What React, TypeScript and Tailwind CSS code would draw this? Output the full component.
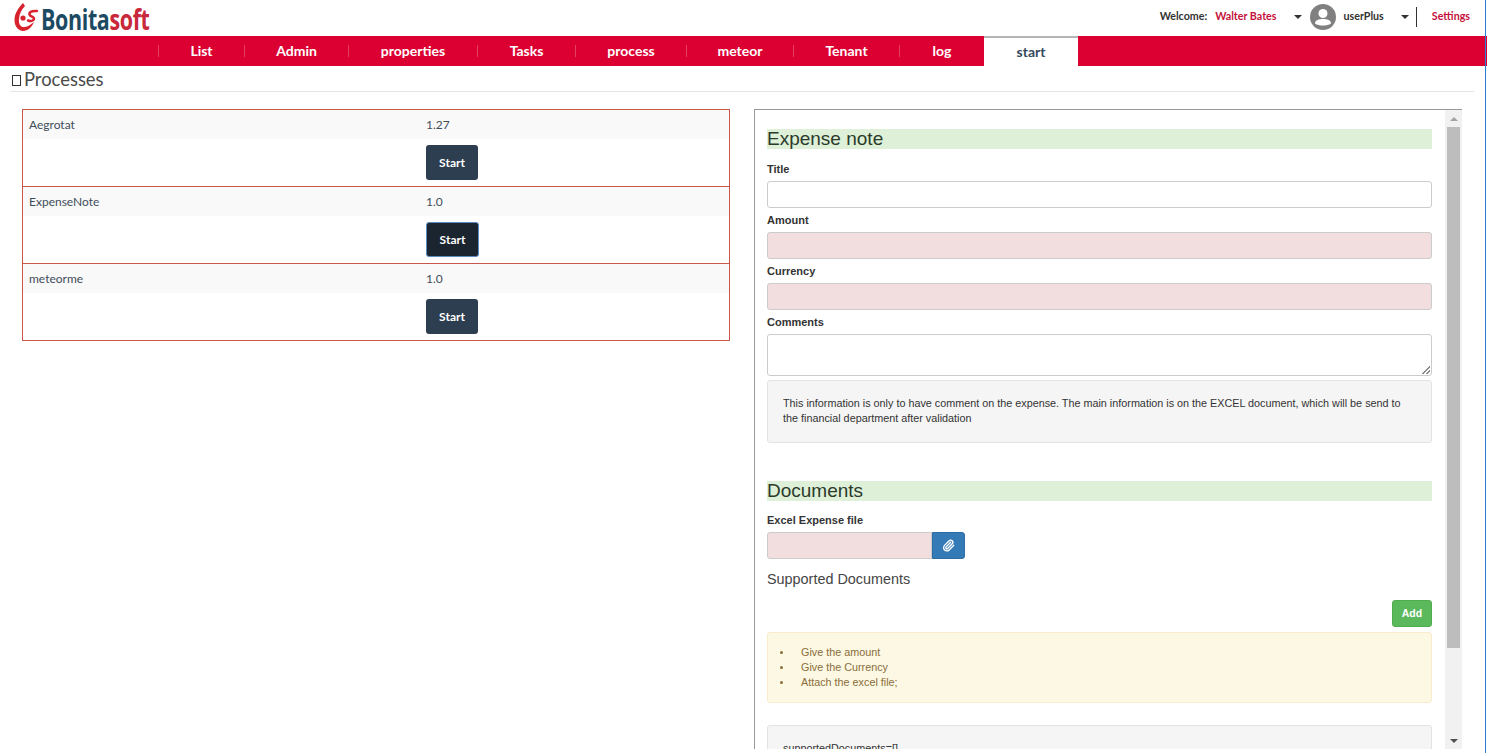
import { Paperclip } from "lucide-react";

const tabs = [
  { label: "List", width: "w-[86px]" },
  { label: "Admin", width: "w-[104px]" },
  { label: "properties", width: "w-[129px]" },
  { label: "Tasks", width: "w-[98px]" },
  { label: "process", width: "w-[111px]" },
  { label: "meteor", width: "w-[107px]" },
  { label: "Tenant", width: "w-[106px]" },
  { label: "log", width: "w-[85px]" },
];

const processes = [
  { name: "Aegrotat", version: "1.27", active: false },
  { name: "ExpenseNote", version: "1.0", active: true },
  { name: "meteorme", version: "1.0", active: false },
];

const hints = ["Give the amount", "Give the Currency", "Attach the excel file;"];

function Logo() {
  return (
    <div className="flex h-[36px] items-center pl-[13px]">
      <svg width="26" height="30" viewBox="0 0 26 30" className="mt-[-3px]">
        <path
          d="M10 1 C5 6 1.500 12 1.500 18 C1.500 25 6 29 10 29 C15 29 19 25 21 20 C17 23.500 13 25.500 10 25 C7 24.500 5.500 21 6 17 C6.500 11 9 7 12 4 Z"
          fill="#d8232f"
        />
        <circle cx="10" cy="16" r="2.600" fill="#d8232f" />
        <path
          d="M24 9 C19 8.500 16 10 16.500 12.500 C17 15 21.500 14.500 21 17 C20.600 19 17.500 19.500 15 18.500"
          fill="none"
          stroke="#d8232f"
          strokeWidth="2.500"
          strokeLinecap="round"
        />
      </svg>
      <div className="ml-[2px] w-[103px] origin-left scale-x-[0.74] font-['Open_Sans',sans-serif] text-[29px] leading-none font-bold tracking-[-0.5px] whitespace-nowrap">
        <span className="text-[#1d4a63]">Bonita</span>
        <span className="text-[#c8283a]">soft</span>
      </div>
    </div>
  );
}

function Caret() {
  return <span className="inline-block border-x-[4px] border-t-[4px] border-x-transparent border-t-[#333]" />;
}

function Avatar() {
  return (
    <svg width="26" height="26" viewBox="0 0 26 26">
      <circle cx="13" cy="13" r="13" fill="#808080" />
      <circle cx="13" cy="9.500" r="4.500" fill="#fff" />
      <path d="M5 19.500 C5 16 9 15 13 15 C17 15 21 16 21 19.500 C19 21 16 21.500 13 21.500 C10 21.500 7 21 5 19.500 Z" fill="#fff" />
    </svg>
  );
}

function Header() {
  return (
    <div className="flex h-[36px] items-center justify-between bg-white">
      <Logo />
      <div className="flex items-center pr-[17px] pb-[3px] font-['Lato',sans-serif] text-[10.700px] font-bold">
        <span className="text-[#333]">Welcome:</span>
        <span className="ml-[8px] text-[#c4113c]">Walter Bates</span>
        <span className="ml-[17px] flex"><Caret /></span>
        <span className="ml-[8px] flex"><Avatar /></span>
        <span className="ml-[8px] text-[#333]">userPlus</span>
        <span className="ml-[17px] flex"><Caret /></span>
        <span className="ml-[7px] h-[20px] w-px bg-[#333]" />
        <span className="ml-[15px] text-[#c4113c]">Settings</span>
      </div>
    </div>
  );
}

function Nav() {
  return (
    <div className="flex h-[30px] bg-[#dc0032] pl-[158px] font-['Lato',sans-serif] text-[14px] font-bold">
      {tabs.map((tab) => (
        <div key={tab.label} className={`flex items-center text-white ${tab.width}`}>
          <span className="h-[12px] w-px bg-[#e5405f]" />
          <span className="flex-1 pb-[2px] text-center">{tab.label}</span>
        </div>
      ))}
      <div className="flex w-[94px] items-center justify-center border-t-2 border-[#b5b5b5] bg-white pb-[2px] text-[#34495e]">start</div>
    </div>
  );
}

function ProcessTable() {
  return (
    <div className="w-[708px] border-x border-b border-[#c9574a] font-['Lato',sans-serif] text-[12px] text-[#3f4d5a]">
      {processes.map((p) => (
        <div key={p.name} className="h-[77px] border-t border-[#c9574a]">
          <div className="flex h-[29px] items-center bg-[#f9f9f9] pl-[6px]">
            <span className="w-[397px]">{p.name}</span>
            <span>{p.version}</span>
          </div>
          <div className="pt-[6px] pl-[403px]">
            <button
              className={
                p.active
                  ? "flex h-[35px] w-[53px] items-center justify-center rounded-[3px] border border-[#5b8cc0] bg-[#1a252f] text-[12px] font-bold text-white"
                  : "flex h-[35px] w-[52px] items-center justify-center rounded-[3px] bg-[#2c3e50] text-[12px] font-bold text-white"
              }
            >
              Start
            </button>
          </div>
        </div>
      ))}
    </div>
  );
}

function Field({ label, pink }: { label: string; pink?: boolean }) {
  return (
    <div className="mb-[5px]">
      <div className="mb-[5px] h-[14px] text-[11px] leading-[14px] font-bold text-[#333]">{label}</div>
      <div
        className={
          pink
            ? "h-[27px] rounded-[3px] border border-[#ccc] bg-[#f2dede]"
            : "h-[27px] rounded-[3px] border border-[#ccc] bg-white"
        }
      />
    </div>
  );
}

function SectionTitle({ children }: { children: string }) {
  return <div className="h-[20px] bg-[#dff0d8] text-[19px] leading-[20px] text-[#2b3b2b]">{children}</div>;
}

function ExpenseForm() {
  return (
    <div className="flex h-[640px] w-[708px] border-t border-l border-[#999]">
      <div className="h-full w-[690px] overflow-hidden pt-[19px] pl-[12px] font-['Liberation_Sans',sans-serif]">
        <div className="w-[665px]">
          <SectionTitle>Expense note</SectionTitle>
          <div className="mt-[13px]">
            <Field label="Title" />
            <Field label="Amount" pink />
            <Field label="Currency" pink />
          </div>
          <div className="mb-[5px] h-[14px] text-[11px] leading-[14px] font-bold text-[#333]">Comments</div>
          <div className="relative h-[42px] rounded-[3px] border border-[#ccc] bg-white">
            <span className="absolute right-[1px] bottom-[1px] h-[8px] w-[8px] bg-[linear-gradient(135deg,transparent_50%,#888_50%,#888_60%,transparent_60%,transparent_75%,#888_75%,#888_85%,transparent_85%)]" />
          </div>
          <div className="mt-[4px] h-[63px] rounded-[3px] border border-[#e3e3e3] bg-[#f5f5f5] px-[15px] pt-[15px] text-[10.800px] leading-[15px] text-[#333]">
            This information is only to have comment on the expense. The main information is on the EXCEL document, which will be send to the financial department after validation
          </div>
          <div className="mt-[38px]">
            <SectionTitle>Documents</SectionTitle>
          </div>
          <div className="mt-[12px] mb-[5px] h-[14px] text-[11px] leading-[14px] font-bold text-[#333]">Excel Expense file</div>
          <div className="flex h-[27px]">
            <div className="w-[165px] rounded-l-[3px] border border-[#ccc] bg-[#f2dede]" />
            <div className="flex w-[33px] items-center justify-center rounded-r-[3px] border border-[#2e6da4] bg-[#337ab7] text-white">
              <Paperclip size={13} strokeWidth={2.500} />
            </div>
          </div>
          <div className="mt-[12px] h-[16px] text-[14.400px] leading-[16px] text-[#444]">Supported Documents</div>
          <div className="mt-[13px] flex justify-end">
            <button className="h-[27px] w-[40px] rounded-[3px] border border-[#4cae4c] bg-[#5cb85c] text-[10.500px] font-bold text-white">Add</button>
          </div>
          <div className="mt-[5px] h-[71px] rounded-[3px] border border-[#faebcc] bg-[#fcf8e3] pt-[12px] pl-[12px] text-[10.800px] leading-[15px] text-[#8a6d3b]">
            {hints.map((hint) => (
              <div key={hint} className="flex items-center">
                <span className="h-[3px] w-[3px] rounded-full bg-[#8a6d3b]" />
                <span className="ml-[18px]">{hint}</span>
              </div>
            ))}
          </div>
          <div className="mt-[22px] h-[60px] rounded-[3px] border border-[#e3e3e3] bg-[#f5f5f5] px-[15px] pt-[15px] text-[10.800px] leading-[15px] text-[#333]">
            supportedDocuments=[]
          </div>
        </div>
      </div>
      <div className="flex h-full w-[17px] flex-col items-center bg-[#f1f1f1]">
        <div className="flex h-[17px] items-center">
          <span className="border-x-[4px] border-b-[4px] border-x-transparent border-b-[#a3a3a3]" />
        </div>
        <div className="h-[521px] w-[13px] bg-[#bdbdbd]" />
        <div className="flex-1" />
        <div className="flex h-[17px] items-center">
          <span className="border-x-[4px] border-t-[4px] border-x-transparent border-t-[#505050]" />
        </div>
      </div>
    </div>
  );
}

export default function App() {
  return (
    <div className="relative h-[753px] w-full overflow-hidden bg-white">
      <Header />
      <Nav />
      <div className="mx-[10px] w-[1464px] border-b border-[#e5e5e5] pt-[3px] pb-[1px]">
        <div className="flex h-[21px] items-center font-['Lato',sans-serif] text-[18.400px] text-[#4a4a4a]">
          <span className="mt-[2px] ml-[2px] inline-block h-[11px] w-[9px] border border-[#333]" />
          <span className="ml-[3px]">Processes</span>
        </div>
      </div>
      <div className="mt-[17px] flex items-start pl-[22px]">
        <ProcessTable />
        <div className="ml-[24px]">
          <ExpenseForm />
        </div>
      </div>
      <div className="absolute top-0 right-[1px] h-full w-px bg-[#2a7fd0]" />
    </div>
  );
}
